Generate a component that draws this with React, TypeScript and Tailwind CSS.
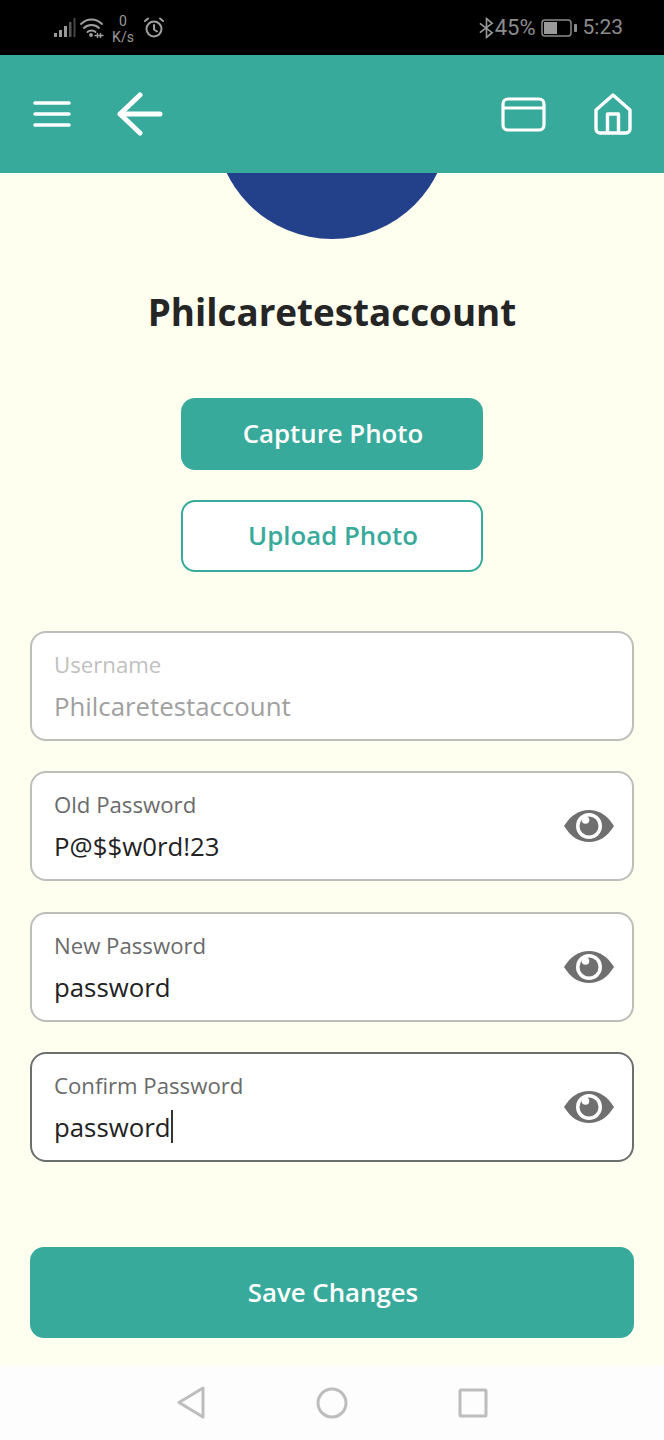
import React from "react";

function Eye() {
  return (
    <svg width="50" height="34" viewBox="0 0 50 34" className="shrink-0">
      <path d="M0 17C7 6 15 1 25 1s18 5 25 16c-7 11-15 16-25 16S7 28 0 17z" fill="#6f6f6f" />
      <circle cx="25" cy="17" r="13" fill="#ffffff" />
      <circle cx="25" cy="17" r="9.5" fill="#6f6f6f" />
      <circle cx="21.5" cy="11" r="3.8" fill="#ffffff" />
    </svg>
  );
}

function Field({ label, value, state, caret, className }: { label: string; value: string; state?: "disabled" | "focus"; caret?: boolean; className?: string }) {
  const disabled = state === "disabled";
  return (
    <div
      className={`h-[110px] rounded-[16px] border-2 bg-white pl-[22px] pr-[18px] flex items-center justify-between ${
        state === "focus" ? "border-[#6b6f6e]" : "border-[#bcbfb9]"
      } ${className ?? ""}`}
    >
      <div className="flex flex-col pt-[2px]">
        <span className={`text-[22.2px] leading-[28px] ${disabled ? "text-[#c0c0c0]" : "text-[#6a6a6a]"}`}>{label}</span>
        <div className="flex items-center mt-[9px] h-[36px]">
          <span className={`text-[25.8px] leading-[36px] ${disabled ? "text-[#a0a0a0]" : "text-[#222222]"}`}>{value}</span>
          {caret && <span className="w-[2px] h-[33px] bg-[#333333]" />}
        </div>
      </div>
      {!disabled && <Eye />}
    </div>
  );
}

export default function App() {
  return (
    <div className="w-[664px] h-[1440px] flex flex-col bg-[#fffff0] overflow-hidden font-['Open_Sans',sans-serif]">
      <div className="h-[55px] bg-black flex items-center justify-between pl-[54px] pr-[41px] shrink-0 text-[#8c8c8c] font-['Roboto',sans-serif]">
        <div className="flex items-center">
          <svg width="22" height="20" viewBox="0 0 22 20">
            <rect x="0" y="15" width="3" height="4" fill="#9a9a9a" />
            <rect x="5" y="12" width="3" height="7" fill="#9a9a9a" />
            <rect x="10" y="8" width="3" height="11" fill="#9a9a9a" />
            <rect x="15" y="4" width="2.5" height="15" fill="#555555" />
            <rect x="19.5" y="0" width="2" height="19" fill="#444444" />
          </svg>
          <svg width="24" height="20" viewBox="0 0 24 20" fill="none" stroke="#a0a0a0" strokeWidth="1.8" strokeLinecap="round" className="ml-[4px]">
            <path d="M1 6c6-6 15-6 21 0" />
            <path d="M4 10c4-4 11-4 15 0" />
            <path d="M7.5 14c2-2 6-2 8 0" />
            <circle cx="11" cy="17" r="1" fill="#a0a0a0" />
            <path d="M15 17.5h8M17.5 15.5v4M20.5 15.5v4" strokeWidth="1.4" />
          </svg>
          <div className="flex flex-col items-center ml-[8px] w-[22px] text-[14px] leading-[16px] text-[#9a9a9a] mt-[3px]">
            <span>0</span>
            <span>K/s</span>
          </div>
          <svg width="22" height="22" viewBox="0 0 22 22" fill="none" stroke="#a0a0a0" strokeWidth="2" strokeLinecap="round" className="ml-[9px]">
            <circle cx="11" cy="12" r="7.5" />
            <path d="M11 8v4.5l3 2M2 4l3-2.5M20 4l-3-2.5" />
          </svg>
        </div>
        <div className="flex items-center">
          <svg width="17" height="22" viewBox="0 0 18 22" fill="none" stroke="#9a9a9a" strokeWidth="1.7">
            <path d="M2 6l13 10-6 5V1l6 5L2 16" />
          </svg>
          <span className="text-[22px] leading-none">45%</span>
          <svg width="36" height="18" viewBox="0 0 36 18" className="ml-[5px]">
            <rect x="1" y="1" width="29" height="16" rx="3" fill="none" stroke="#8c8c8c" strokeWidth="1.5" />
            <rect x="3" y="3" width="13" height="12" fill="#9a9a9a" />
            <rect x="33" y="5" width="3" height="8" rx="1" fill="#8c8c8c" />
          </svg>
          <span className="text-[21px] leading-none ml-[6px]">5:23</span>
        </div>
      </div>

      <div className="h-[118px] bg-[#38aa9c] flex items-center justify-between pl-[33px] pr-[32px] shrink-0">
        <div className="flex items-center">
          <svg width="38" height="28" viewBox="0 0 38 28" stroke="#ffffff" strokeWidth="3.5" strokeLinecap="round">
            <path d="M2 3h34M2 14h34M2 25h34" />
          </svg>
          <svg width="46" height="46" viewBox="0 0 46 46" fill="none" stroke="#ffffff" strokeWidth="5" strokeLinecap="round" strokeLinejoin="round" className="ml-[46px]">
            <path d="M43 23H3M23 4L3 23l20 19" />
          </svg>
        </div>
        <div className="flex items-center">
          <svg width="46" height="36" viewBox="0 0 46 36" fill="none" stroke="#ffffff" strokeWidth="3.2" strokeLinejoin="round" className="mt-[1px]">
            <rect x="3" y="2" width="41" height="31" rx="5" />
            <path d="M3 11h41" />
          </svg>
          <svg width="38" height="42" viewBox="0 0 38 42" fill="none" stroke="#ffffff" strokeWidth="3.4" strokeLinejoin="round" className="ml-[48px]">
            <path d="M2 17L19 2l17 15v19a4 4 0 0 1-4 4H6a4 4 0 0 1-4-4z" />
            <path d="M13.5 40V21h11v19" />
          </svg>
        </div>
      </div>

      <div className="flex-1 flex flex-col px-[30px]">
        <div className="h-[66px] overflow-hidden flex items-end justify-center shrink-0">
          <div className="w-[234px] h-[234px] rounded-full bg-[#23418a] shrink-0" />
        </div>
        <h1 className="mt-[49px] text-center text-[36.8px] leading-[48px] font-bold text-[#252525]">Philcaretestaccount</h1>
        <div className="mt-[62px] flex flex-col items-center gap-[30px]">
          <div className="w-[302px] h-[72px] rounded-[14px] bg-[#38aa9c] text-white text-[25.8px] font-semibold flex items-center justify-center pb-[2px] pl-[2px]">Capture Photo</div>
          <div className="w-[302px] h-[72px] rounded-[14px] border-2 border-[#38aa9c] bg-white text-[#38aa9c] text-[25.8px] font-semibold flex items-center justify-center pb-[2px] pl-[2px]">Upload Photo</div>
        </div>
        <div className="mt-[59px] flex flex-col gap-[30px]">
          <Field label="Username" value="Philcaretestaccount" state="disabled" />
          <Field label="Old Password" value="P@$$w0rd!23" />
          <Field label="New Password" value="password" className="mt-[1px]" />
          <Field label="Confirm Password" value="password" state="focus" caret />
        </div>
        <div className="mt-[85px] h-[91px] rounded-[14px] bg-[#38aa9c] text-white text-[25.8px] font-semibold flex items-center justify-center pl-[2px]">Save Changes</div>
      </div>

      <div className="h-[75px] bg-[#fdfdfd] shrink-0 flex items-center justify-center gap-[110px]">
        <svg width="30" height="35" viewBox="0 0 30 35" fill="none" stroke="#bdbdbd" strokeWidth="3" strokeLinejoin="round">
          <path d="M27 3v29L3 17.5z" />
        </svg>
        <svg width="32" height="32" viewBox="0 0 32 32" fill="none" stroke="#bdbdbd" strokeWidth="3">
          <circle cx="16" cy="16" r="14" />
        </svg>
        <svg width="30" height="30" viewBox="0 0 30 30" fill="none" stroke="#bdbdbd" strokeWidth="3" strokeLinejoin="round">
          <rect x="2" y="2" width="26" height="26" rx="1" />
        </svg>
      </div>
    </div>
  );
}
